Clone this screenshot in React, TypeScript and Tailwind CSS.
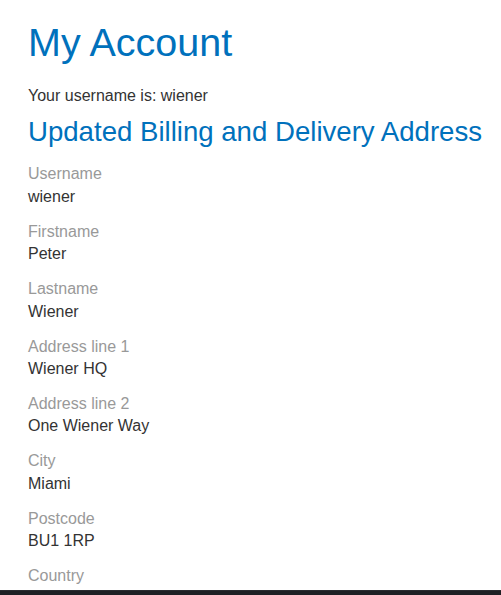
import React from "react";

const fields = [
  { label: "Username", value: "wiener" },
  { label: "Firstname", value: "Peter" },
  { label: "Lastname", value: "Wiener" },
  { label: "Address line 1", value: "Wiener HQ" },
  { label: "Address line 2", value: "One Wiener Way" },
  { label: "City", value: "Miami" },
  { label: "Postcode", value: "BU1 1RP" },
  { label: "Country", value: "USA" }
];

export default function App() {
  return (
    <div className="min-h-screen bg-white font-['Liberation_Sans',Arial,sans-serif] text-[#333333]">
      <div className="pl-[28px] pt-[19px]">
        <h1 className="text-[39.5px] leading-[1.2] text-[#0071bc]">My Account</h1>
        <p className="mt-[18.5px] text-[16px] leading-[22.4px]">Your username is: wiener</p>
        <h2 className="mt-[8px] whitespace-nowrap text-[27.6px] leading-[1.2] text-[#0071bc]">
          Updated Billing and Delivery Address
        </h2>
        <div className="mt-[15px] flex flex-col gap-[12.6px]">
          {fields.map((f) => (
            <div key={f.label} className="text-[16px] leading-[22.4px]">
              <div className="text-[#999999]">{f.label}</div>
              <div>{f.value}</div>
            </div>
          ))}
        </div>
      </div>
      <div className="fixed bottom-0 left-0 right-0 h-[5px] border-t border-[#2a2c30] bg-[#1e2024]" />
    </div>
  );
}
